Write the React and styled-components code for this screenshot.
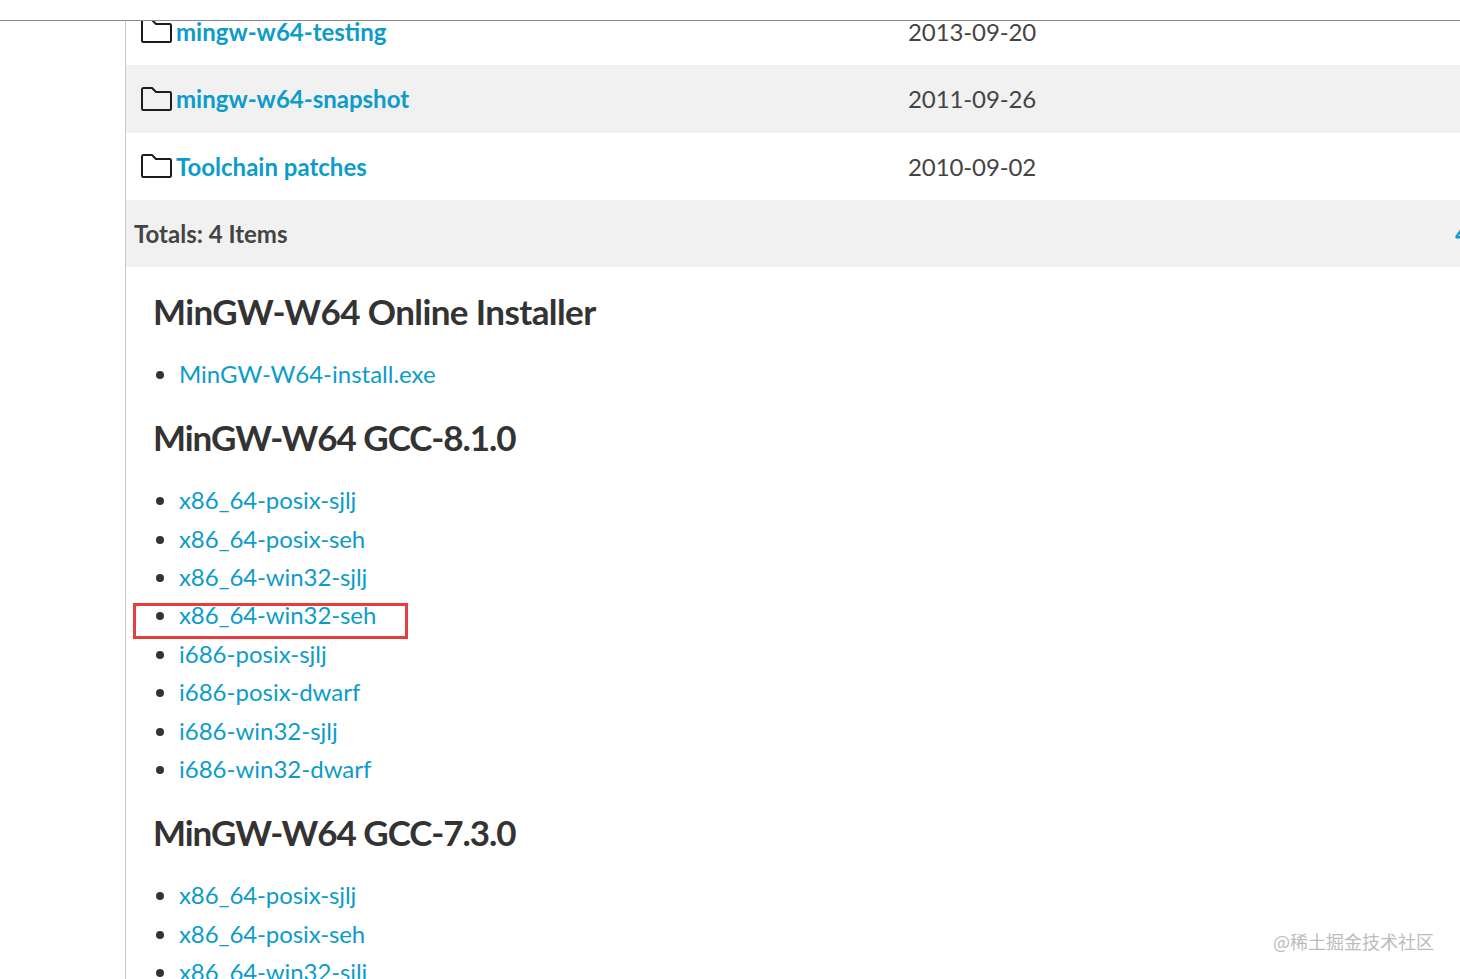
import React from 'react';
import styled, {createGlobalStyle} from 'styled-components';

const GlobalStyle = createGlobalStyle`
  html, body {
    margin: 0;
    padding: 0;
    background: #fff;
    overflow: hidden;
  }
  body {
    font-family: Lato, "Liberation Sans", sans-serif;
    color: #333;
  }
`;

const Page = styled.div`
  position: relative;
  width: 1460px;
  height: 979px;
  overflow: hidden;
  background: #fff;
`;

const TopBar = styled.div`
  height: 20px;
  background: #fff;
  border-bottom: 1px solid #8a8a8a;
  position: relative;
  z-index: 2;
`;

const Main = styled.main`
  margin-left: 125px;
  height: 958px;
  border-left: 1px solid #c8c8c8;
  overflow: hidden;
`;

const Table = styled.div`
  width: 1500px;
  margin-top: -23.5px;
`;

const Row = styled.div`
  display: grid;
  grid-template-columns: 782px 547px 1fr;
  align-items: center;
  height: ${props => props.$height || 67.5}px;
  background: ${props => (props.$shaded ? '#f1f1f1' : '#fff')};
  font-size: 24px;
`;

const NameCell = styled.div`
  display: flex;
  align-items: center;
  gap: 4px;
  padding-left: 14px;
`;

const FolderLink = styled.a`
  color: #0d9cca;
  font-weight: 700;
  font-size: 24px;
`;

const DateCell = styled.div`
  color: #444;
  font-size: 24px;
  letter-spacing: -0.1px;
`;

const TotalLabel = styled.div`
  padding-left: 8px;
  color: #444;
  font-weight: 700;
  font-size: 24px;
`;

const TotalValue = styled.div`
  color: #0d9cca;
  font-weight: 700;
`;

const Content = styled.section`
  padding: 22.5px 0 0 27px;
`;

const Heading = styled.h2`
  margin: 0;
  font-size: 35px;
  line-height: 42px;
  font-weight: 700;
  letter-spacing: ${props => (props.$tight ? '-1.05px' : '-0.6px')};
  color: #333;
`;

const List = styled.ul`
  margin: 0;
  padding: 23.3px 0 22.7px 26px;
  list-style: disc;
`;

const Item = styled.li`
  position: relative;
  font-size: 24px;
  line-height: 38.4px;
  color: #333;
`;

const ItemLink = styled.a`
  color: #0d9cca;
  letter-spacing: ${props => (props.$narrow ? '-0.1px' : '0')};
`;

const Highlight = styled.span`
  position: absolute;
  left: -46px;
  top: 6.5px;
  width: 269px;
  height: 30px;
  border: 3px solid #e63d3d;
  pointer-events: none;
`;

const Watermark = styled.div`
  position: absolute;
  right: 26px;
  top: 928px;
  font-family: "Noto Sans CJK SC", sans-serif;
  font-size: 18px;
  line-height: 26px;
  color: #bcbcbc;
`;

const FolderIcon = () => (
  <svg width="32" height="24" viewBox="0 0 32 24" fill="none">
    <path
      d="M2 2.5C2 1.7 2.5 1 3.3 1H12L16 5H29.7C30.5 5 31 5.5 31 6.3V21.7C31 22.5 30.5 23 29.7 23H3.3C2.5 23 2 22.5 2 21.7Z"
      stroke="#1c1c1c"
      strokeWidth="2"
      strokeLinejoin="round"
    />
  </svg>
);

const folders = [
  {name: 'mingw-w64-testing', date: '2013-09-20'},
  {name: 'mingw-w64-snapshot', date: '2011-09-26', shaded: true},
  {name: 'Toolchain patches', date: '2010-09-02'},
];

const sections = [
  {title: 'MinGW-W64 Online Installer', links: ['MinGW-W64-install.exe']},
  {
    title: 'MinGW-W64 GCC-8.1.0',
    tight: true,
    links: [
      'x86_64-posix-sjlj',
      'x86_64-posix-seh',
      'x86_64-win32-sjlj',
      'x86_64-win32-seh',
      'i686-posix-sjlj',
      'i686-posix-dwarf',
      'i686-win32-sjlj',
      'i686-win32-dwarf',
    ],
    marked: 'x86_64-win32-seh',
  },
  {
    title: 'MinGW-W64 GCC-7.3.0',
    tight: true,
    links: ['x86_64-posix-sjlj', 'x86_64-posix-seh', 'x86_64-win32-sjlj'],
  },
];

const App = () => {
  return (
    <Page>
      <GlobalStyle />
      <TopBar />
      <Main>
        <Table>
          {folders.map(folder => (
            <Row key={folder.name} $shaded={folder.shaded}>
              <NameCell>
                <FolderIcon />
                <FolderLink>{folder.name}</FolderLink>
              </NameCell>
              <DateCell>{folder.date}</DateCell>
            </Row>
          ))}
          <Row $shaded $height={67}>
            <TotalLabel>Totals: 4 Items</TotalLabel>
            <div />
            <TotalValue>4</TotalValue>
          </Row>
        </Table>
        <Content>
          {sections.map(section => (
            <div key={section.title}>
              <Heading $tight={section.tight}>{section.title}</Heading>
              <List>
                {section.links.map(link => (
                  <Item key={link}>
                    <ItemLink $narrow={link.startsWith('x86')}>{link}</ItemLink>
                    {section.marked === link && <Highlight />}
                  </Item>
                ))}
              </List>
            </div>
          ))}
        </Content>
      </Main>
      <Watermark>@稀土掘金技术社区</Watermark>
    </Page>
  );
};

export default App;
